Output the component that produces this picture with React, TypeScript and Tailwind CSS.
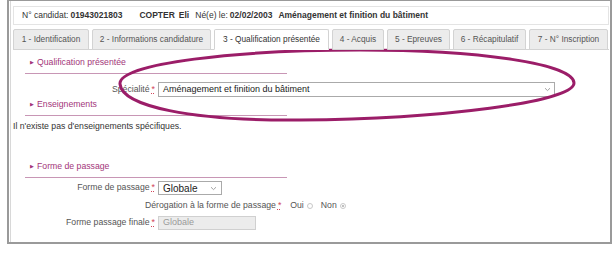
import React from 'react';

const tabs = [
  { label: '1 - Identification', w: 'w-[76px]' },
  { label: '2 - Informations candidature', w: 'w-[119px]' },
  { label: '3 - Qualification présentée', w: 'w-[115px]', active: true },
  { label: '4 - Acquis', w: 'w-[52px]' },
  { label: '5 - Epreuves', w: 'w-[63px]' },
  { label: '6 - Récapitulatif', w: 'w-[73px]' },
  { label: '7 - N° Inscription', w: 'w-[79px]' },
];

function Heading({ title, className = '' }: { title: string; className?: string }) {
  return (
    <div className={`ml-[12px] w-[262px] h-[17px] border-b border-[#c896b5] pl-[5px] flex items-start leading-[11px] text-[8.7px] text-[#a3367a] ${className}`}>
      <span className="text-[5px] leading-[11px] mr-[3px]">▶</span>
      <span>{title}</span>
    </div>
  );
}

function Req() {
  return <span className="text-[#d2455a] underline decoration-dotted ml-[2px]">*</span>;
}

function Chevron() {
  return (
    <svg width="7" height="5" viewBox="0 0 7 5" className="shrink-0">
      <path d="M1 1.2 L3.5 3.6 L6 1.2" fill="none" stroke="#999" strokeWidth="0.9" />
    </svg>
  );
}

export default function App() {
  return (
    <div className="relative w-[616px] h-[256px] bg-white font-['Liberation_Sans',Arial,sans-serif] text-[#444]">
      <div className="ml-[7px] w-[605px] h-[244px] border-x-2 border-b-2 border-t border-[#9a9a9a] pl-[1px]">
        <div className="h-full border-l border-[#d8d8d8] pl-[2px] pr-[1px] pt-[5px]">
          {/* candidate header */}
          <div className="h-[19px] border border-[#e4e4e4] flex items-center pl-[8px] text-[8.5px] text-[#333] whitespace-nowrap">
            <span>N° candidat: </span>
            <b className="ml-[2px]">01943021803</b>
            <b className="ml-[17px]">COPTER</b>
            <b className="ml-[4px]">Eli</b>
            <span className="ml-[6px]">Né(e) le: </span>
            <b className="ml-[2px]">02/02/2003</b>
            <b className="ml-[6px]">Aménagement et finition du bâtiment</b>
          </div>

          {/* tabs */}
          <div className="mt-[4px] flex gap-[3px] h-[20px] relative z-10">
            {tabs.map(t => (
              <div
                key={t.label}
                className={`${t.w} h-[21px] shrink-0 flex items-center justify-center whitespace-nowrap text-[8.3px] rounded-t-[2px] border border-[#d3d3d3] ${t.active ? 'bg-white border-b-white text-[#333]' : 'bg-[#ececec] text-[#555]'}`}
              >
                {t.label}
              </div>
            ))}
          </div>

          {/* content */}
          <div className="border-t border-[#d3d3d3] text-[8.7px]">
            <Heading title="Qualification présentée" className="mt-[7px]" />

            <div className="mt-[8px] flex items-center h-[15px]">
              <div className="w-[142px] text-right text-[#555]">Spécialité<Req /></div>
              <div className="ml-[3px] w-[397px] h-[15px] border border-[#aaa] flex items-center justify-between pl-[4px] pr-[3px] text-[9px] text-[#222]">
                <span>Aménagement et finition du bâtiment</span>
                <Chevron />
              </div>
            </div>

            <Heading title="Enseignements" className="mt-[2px]" />

            <div className="mt-[5px] leading-[11px] text-[#333]">Il n'existe pas d'enseignements spécifiques.</div>

            <Heading title="Forme de passage" className="mt-[29px]" />

            <div className="mt-[3px] flex items-center h-[14px]">
              <div className="w-[142px] text-right text-[#555]">Forme de passage<Req /></div>
              <div className="ml-[3px] w-[64px] h-[14px] border border-[#aaa] flex items-center justify-between pl-[4px] pr-[4px] text-[10px] text-[#222]">
                <span>Globale</span>
                <Chevron />
              </div>
            </div>

            <div className="mt-[5px] flex items-center h-[11px] pl-[132px] text-[#555]">
              <span>Dérogation à la forme de passage<Req /></span>
              <span className="ml-[9px]">Oui</span>
              <span className="ml-[3px] w-[6px] h-[6px] rounded-full border border-[#c8c8c8]" />
              <span className="ml-[8px]">Non</span>
              <span className="ml-[3px] w-[6px] h-[6px] rounded-full border border-[#c8c8c8] flex items-center justify-center">
                <span className="w-[2px] h-[2px] rounded-full bg-[#aaa]" />
              </span>
            </div>

            <div className="mt-[5px] flex items-center h-[14px]">
              <div className="w-[142px] text-right text-[#555]">Forme passage finale<Req /></div>
              <div className="ml-[3px] w-[98px] h-[14px] border border-[#d0d0d0] bg-[#ececec] flex items-center pl-[4px] text-[9px] text-[#9a9a9a]">
                Globale
              </div>
            </div>
          </div>
        </div>
      </div>

      {/* hand-drawn annotation */}
      <svg className="absolute left-0 top-0 pointer-events-none" width="616" height="256" viewBox="0 0 616 256">
        <path
          d="M120 84 C118 63 240 50 360 50 C480 50 574 64 574 83 C574 102 440 119 300 120 C190 121 122 106 120 84 Z"
          fill="none"
          stroke="#9b1d68"
          strokeWidth="3"
        />
      </svg>
    </div>
  );
}
